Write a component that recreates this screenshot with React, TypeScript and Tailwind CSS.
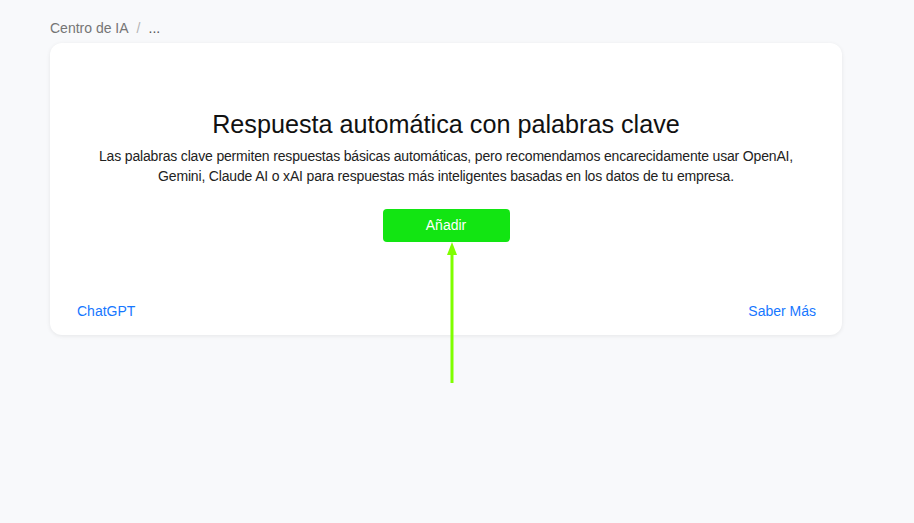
import React from "react";

export default function App() {
  return (
    <div
      className="min-h-[523px] w-full bg-[#f8f9fb] px-[50px] pt-[18px]"
      style={{ fontFamily: '"Liberation Sans", Arial, sans-serif' }}
    >
      <div className="flex items-center gap-[8px] text-[14px] leading-[20px] text-[#757575]">
        <span>Centro de IA</span>
        <span className="text-[#b5b5b5]">/</span>
        <span className="text-[#555]">...</span>
      </div>
      <div className="relative mt-[5px] flex w-[792px] flex-col items-center rounded-[12px] bg-white px-[27px] pb-[14px] pt-[65px] shadow-[0_1px_4px_rgba(0,0,0,0.08)]">
        <h1 className="text-[25.2px] leading-[32px] text-[#111]">
          Respuesta automática con palabras clave
        </h1>
        <p className="mt-[6px] text-center text-[14px] leading-[20px] tracking-[-0.17px] text-[#222]">
          Las palabras clave permiten respuestas básicas automáticas, pero recomendamos encarecidamente usar OpenAI,
          <br />
          Gemini, Claude AI o xAI para respuestas más inteligentes basadas en los datos de tu empresa.
        </p>
        <button className="mt-[23px] h-[33px] w-[127px] rounded-[4px] bg-[#12e512] text-[14px] text-white">
          Añadir
        </button>
        <div className="mt-[59px] flex w-full justify-between text-[14px] leading-[20px] text-[#1677ff]">
          <a>ChatGPT</a>
          <a className="mr-[-1px]">Saber Más</a>
        </div>
        <svg
          className="absolute left-[396px] top-[199px]"
          width="12"
          height="142"
          viewBox="0 0 12 142"
        >
          <line x1="6" y1="10" x2="6" y2="141" stroke="#7fff00" strokeWidth="3" />
          <polygon points="6,0 11,13 1,13" fill="#7fff00" />
        </svg>
      </div>
    </div>
  );
}
